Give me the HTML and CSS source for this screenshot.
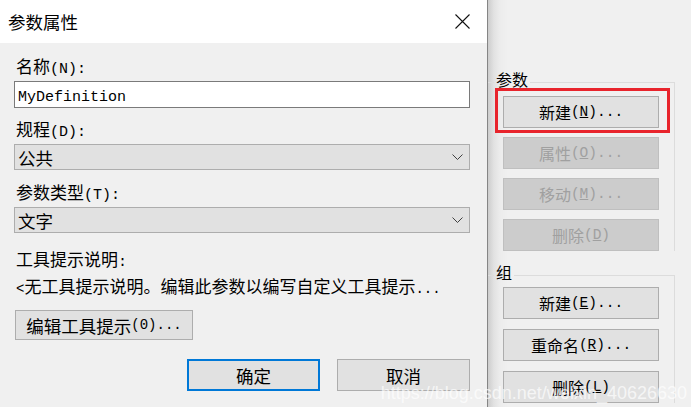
FILE: index.html
```html
<!DOCTYPE html>
<html lang="zh">
<head>
<meta charset="utf-8">
<title>参数属性</title>
<link rel="stylesheet" href="styles.css">
</head>
<body>
<div class="screen">
  <div class="dialog">
    <div class="titlebar">
      <span class="title">参数属性</span>
      <svg class="close" width="15" height="15" viewBox="0 0 15 15"><path d="M0.5 0.5L14.5 14.5M14.5 0.5L0.5 14.5" stroke="#111" stroke-width="1.1" fill="none"/></svg>
    </div>
    <div class="body">
      <div class="label">名称<span class="lat">(N):</span></div>
      <div class="input"><span class="mono">MyDefinition</span></div>
      <div class="label l2">规程<span class="lat">(D):</span></div>
      <div class="select"><span>公共</span><svg class="chev" width="11" height="7" viewBox="0 0 11 7"><polyline points="0.5,0.5 5.5,5.5 10.5,0.5" stroke="#404040" stroke-width="1" fill="none"/></svg></div>
      <div class="label l3">参数类型<span class="lat">(T):</span></div>
      <div class="select"><span>文字</span><svg class="chev" width="11" height="7" viewBox="0 0 11 7"><polyline points="0.5,0.5 5.5,5.5 10.5,0.5" stroke="#404040" stroke-width="1" fill="none"/></svg></div>
      <div class="label l4">工具提示说明<span class="lat">:</span></div>
      <div class="label l5"><span class="lat">&lt;</span>无工具提示说明。编辑此参数以编写自定义工具提示<span class="lat">...</span></div>
      <div class="btn edit">编辑工具提示<span class="lat">(0)...</span></div>
      <div class="footer">
        <div class="btn ok">确定</div>
        <div class="btn">取消</div>
      </div>
    </div>
  </div>
  <div class="side">
    <fieldset class="group g1">
      <legend>参数</legend>
      <div class="rbtn hl">新建<span class="lat">(<u>N</u>)...</span></div>
      <div class="rbtn dis">属性<span class="lat">(<u>O</u>)...</span></div>
      <div class="rbtn dis">移动<span class="lat">(<u>M</u>)...</span></div>
      <div class="rbtn dis">删除<span class="lat">(<u>D</u>)</span></div>
    </fieldset>
    <fieldset class="group g2">
      <legend>组</legend>
      <div class="rbtn">新建<span class="lat">(<u>E</u>)...</span></div>
      <div class="rbtn">重命名<span class="lat">(<u>R</u>)...</span></div>
      <div class="rbtn">删除<span class="lat">(<u>L</u>)</span></div>
    </fieldset>
  </div>
  <div class="watermark">https://blog.csdn.net/weixin_40626630</div>
</div>
</body>
</html>
```
FILE: styles.css
```css
* { box-sizing: border-box; margin: 0; padding: 0; }
html, body { width: 691px; height: 407px; overflow: hidden; }
body {
  background: #f0f0f0;
  font-family: "Noto Sans CJK SC", sans-serif;
  color: #000;
}
.screen { display: flex; height: 407px; position: relative; }

.dialog {
  width: 488px;
  flex: none;
  border-right: 1px solid #858585;
  background: #f0f0f0;
  display: flex;
  flex-direction: column;
}
.titlebar {
  height: 43px;
  background: #fff;
  display: flex;
  align-items: center;
  justify-content: space-between;
  padding: 0 17px 0 8px;
}
.title { font-size: 17.5px; line-height: 20px; }
.close { display: block; margin-top: -1px; }

.body { padding: 12px 17px 0 14px; display: flex; flex-direction: column; }
.label {
  height: 22px;
  line-height: 22px;
  font-size: 17px;
  padding-left: 2px;
  white-space: nowrap;
}
.lat { font-family: "Liberation Mono", monospace; font-size: 15px; }
.mono { font-family: "Liberation Mono", monospace; font-size: 15px; }
.l2 { margin-top: 10px; }
.l3 { margin-top: 11px; }
.l4 { margin-top: 15px; }
.l5 { margin-top: 5px; }
.l5 .lat { font-size: 14px; }

.input {
  margin-top: 4px;
  height: 27px;
  border: 1px solid #7a7a7a;
  background: #fff;
  padding-left: 3px;
  line-height: 25px;
}
.select {
  margin-top: 4px;
  height: 26px;
  border: 1px solid #adadad;
  background: #e1e1e1;
  display: flex;
  align-items: center;
  justify-content: space-between;
  padding: 0 6px 0 3px;
  font-size: 17.5px;
}
.chev { display: block; }

.btn {
  height: 32px;
  width: 133px;
  border: 1px solid #adadad;
  background: #e1e1e1;
  display: flex;
  align-items: center;
  justify-content: center;
  font-size: 17.5px;
  white-space: nowrap;
}
.edit { margin-top: 13px; margin-left: 1px; width: 178px; height: 30px; }
.edit .lat { font-size: 14px; }
.footer { margin-top: 19px; display: flex; justify-content: flex-end; gap: 17px; }
.ok { border: 2px solid #0078d7; }

.side {
  flex: 1;
  padding-top: 70px;
  background: linear-gradient(to right, #cdcdcd 0, #e2e2e2 6px, #ececec 12px, #f0f0f0 20px);
}
.group {
  width: 187px;
  border: none;
  border-top: 1px solid #dcdcdc;
  border-right: 1px solid #dcdcdc;
  padding: 2px 15px 0 15px;
  display: flex;
  flex-direction: column;
  gap: 9px;
}
.g2 { margin-top: 12px; padding-top: 0; gap: 10px; }
.group legend {
  font-size: 16px;
  line-height: 18px;
  padding: 0 2px 6px;
  margin-left: -9px;
}
.rbtn {
  height: 32px;
  border: 1px solid #adadad;
  background: #e1e1e1;
  display: flex;
  align-items: center;
  justify-content: center;
  font-size: 16px;
  white-space: nowrap;
}
.rbtn .lat { font-size: 14.5px; }
.dis { background: #cccccc; border-color: #bfbfbf; color: #a0a0a0; }
.hl { position: relative; }
.hl::after {
  content: "";
  position: absolute;
  left: -9px;
  top: -9px;
  right: -12px;
  bottom: -6px;
  border: 3px solid #e8242c;
}

.watermark {
  position: absolute;
  right: 4px;
  bottom: 3px;
  font-family: "Liberation Sans", sans-serif;
  font-size: 18px;
  color: rgba(255, 255, 255, 0.7);
  white-space: nowrap;
}
```
